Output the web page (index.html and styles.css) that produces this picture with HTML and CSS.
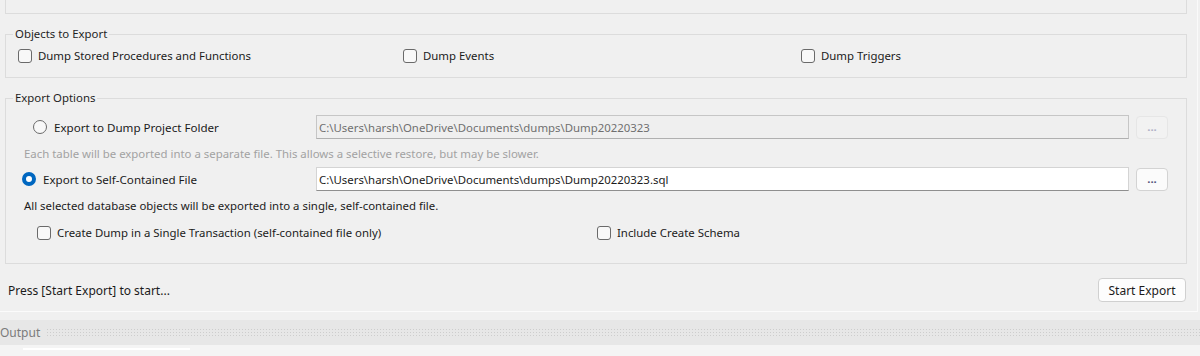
FILE: index.html
```html
<!DOCTYPE html>
<html lang="en">
<head>
    <meta charset="UTF-8">
    <title>Data Export</title>
    <link rel="stylesheet" href="styles.css">
</head>
<body>
    <div class="window">
        <div class="panel">
            <div class="top-box"></div>

            <fieldset class="group objects">
                <legend>Objects to Export</legend>
                <div class="check-grid">
                    <label class="check"><span class="box"></span>Dump Stored Procedures and Functions</label>
                    <label class="check"><span class="box"></span>Dump Events</label>
                    <label class="check"><span class="box"></span>Dump Triggers</label>
                </div>
            </fieldset>

            <fieldset class="group options">
                <legend>Export Options</legend>

                <div class="target-row first">
                    <label class="radio folder"><span class="dot"></span>Export to Dump Project Folder</label>
                    <input class="path" type="text" value="C:\Users\harsh\OneDrive\Documents\dumps\Dump20220323" disabled>
                    <button class="browse" disabled>...</button>
                </div>
                <p class="note muted">Each table will be exported into a separate file. This allows a selective restore, but may be slower.</p>

                <div class="target-row second">
                    <label class="radio file"><span class="dot checked"></span>Export to Self-Contained File</label>
                    <input class="path" type="text" value="C:\Users\harsh\OneDrive\Documents\dumps\Dump20220323.sql">
                    <button class="browse">...</button>
                </div>
                <p class="note">All selected database objects will be exported into a single, self-contained file.</p>

                <div class="option-grid">
                    <label class="check"><span class="box"></span>Create Dump in a Single Transaction (self-contained file only)</label>
                    <label class="check"><span class="box"></span>Include Create Schema</label>
                </div>
            </fieldset>

            <div class="footer">
                <span class="status">Press [Start Export] to start...</span>
                <button class="btn">Start Export</button>
            </div>
        </div>

        <div class="output-bar">
            <span class="output-title">Output</span>
            <div class="grip"></div>
        </div>
        <div class="output-body">
            <div class="scroll-line"></div>
        </div>
    </div>
</body>
</html>
```

FILE: styles.css
```css
* {
    margin: 0;
    padding: 0;
    box-sizing: border-box;
}

body {
    font-family: "Noto Sans", "Open Sans", sans-serif;
    font-size: 11.4px;
    color: #1b1b1b;
    background: #f0f0f0;
    width: 1200px;
    height: 356px;
    overflow: hidden;
}

.panel {
    width: 1198px;
    border-right: 1px solid #fafafa;
    border-bottom: 1px solid #fbfbfb;
    padding-bottom: 9px;
}

.top-box {
    height: 14px;
    margin: 0 10px 0 5px;
    border: 1px solid #dcdcdc;
    border-top: none;
}

/* group boxes */
.group {
    border: 1px solid #dcdcdc;
    margin: 12px 10px 0 5px;
    min-width: 0;
}

.group legend {
    margin-left: 7px;
    padding: 0 2px;
    line-height: 16px;
    color: #1f1f1f;
}

.objects {
    padding: 6px 0 13px 0;
}

.check-grid {
    display: grid;
    grid-template-columns: 385px 398px 1fr;
    padding-left: 12px;
}

.check {
    display: flex;
    align-items: center;
    gap: 6px;
    line-height: 16px;
}

.box {
    width: 14px;
    height: 14px;
    border: 1px solid #6a6a6a;
    border-radius: 3px;
    background: #f8f8f8;
    flex-shrink: 0;
}

.options {
    padding: 0 0 22px 0;
}

.target-row {
    display: grid;
    grid-template-columns: 303px 813px 32px;
    column-gap: 7px;
    align-items: center;
}

.target-row.first {
    margin-top: 9px;
}

.target-row.second {
    margin-top: 5px;
}

.radio {
    display: flex;
    align-items: center;
    gap: 7px;
    font-size: 11.6px;
}

.radio.folder {
    margin-left: 27px;
}

.radio.file {
    margin-left: 16px;
}

.dot {
    width: 14px;
    height: 14px;
    border-radius: 50%;
    border: 1px solid #6a6a6a;
    background: #f8f8f8;
    flex-shrink: 0;
}

.dot.checked {
    border: 4px solid #0067c0;
    background: #fff;
}

.path {
    height: 24px;
    font: inherit;
    color: #1b1b1b;
    padding: 0 2px;
    background: #fff;
    border: 1px solid #d4d4d4;
    border-bottom-color: #8f8f8f;
    outline: none;
}

.path:disabled {
    background: #efefef;
    color: #6f6f6f;
    border-color: #c6c6c6;
    border-bottom-color: #b0b0b0;
}

.browse {
    height: 23px;
    font: inherit;
    font-weight: bold;
    color: #55557a;
    background: #fbfbfb;
    border: 1px solid #d3d3d3;
    border-radius: 4px;
    line-height: 10px;
}

.browse:disabled {
    background: #f2f2f2;
    border-color: #e6e6e6;
    color: #b0b0c6;
}

.note {
    margin: 7px 0 0 18px;
    line-height: 16px;
}

.note.muted {
    color: #a2a2a2;
}

.option-grid {
    display: grid;
    grid-template-columns: 560px 1fr;
    margin: 11px 0 0 31px;
}

/* footer */
.footer {
    display: flex;
    align-items: center;
    justify-content: space-between;
    margin: 14px 11px 0 8px;
}

.status {
    font-size: 12px;
}

.btn {
    width: 88px;
    height: 24px;
    font: inherit;
    font-size: 12px;
    color: #1b1b1b;
    background: #fdfdfd;
    border: 1px solid #d0d0d0;
    border-radius: 4px;
}

/* output dock */
.output-bar {
    display: flex;
    align-items: center;
    gap: 6px;
    height: 25px;
    margin-top: 8px;
    background: #e7e7e7;
}

.output-title {
    font-size: 12px;
    color: #7b7b7b;
}

.grip {
    flex: 1;
    height: 9px;
    background-image: radial-gradient(circle, #cdcdcd 0.7px, transparent 1px);
    background-size: 3px 3px;
}

.output-body {
    height: 12px;
    background: #f4f4f4;
    padding: 3px 0 0 23px;
}

.scroll-line {
    width: 167px;
    height: 2px;
    background: #ffffff;
}
```
